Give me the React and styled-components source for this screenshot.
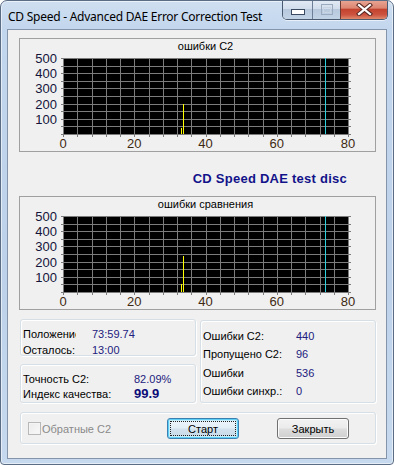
import React from 'react';
import styled, { createGlobalStyle } from 'styled-components';

const GlobalStyle = createGlobalStyle`
	html, body {
		margin: 0;
		padding: 0;
		background: #ffffff;
		overflow: hidden;
	}
	body {
		font-family: 'Liberation Sans', Arial, sans-serif;
		font-size: 11px;
	}
`;

const PLOT = { left: 43, right: 328, top: 9, bottom: 85 };
const colW = (PLOT.right - PLOT.left) / 20;
const rowH = (PLOT.bottom - PLOT.top) / 10;

const Chart = ({ title, bars, marker }) => {
	const vLines = Array.from({ length: 21 }, (_, i) => Math.round(PLOT.left + i * colW) + 0.5);
	const hLines = Array.from({ length: 11 }, (_, j) => Math.round(PLOT.top + j * rowH) + 0.5);
	return (
		<ChartBox>
			<ChartTitle>{title}</ChartTitle>
			<PlotSvg width='355' height='102'>
				<rect
					x={PLOT.left}
					y={PLOT.top}
					width={PLOT.right - PLOT.left}
					height={PLOT.bottom - PLOT.top}
					fill='#000'
				/>
				{vLines.map((x) => (
					<line key={'v' + x} x1={x} x2={x} y1={PLOT.top} y2={PLOT.bottom + 3} stroke='#7c7c7c' />
				))}
				{hLines.map((y) => (
					<line key={'h' + y} x1={PLOT.left - 2} x2={PLOT.right + 3} y1={y} y2={y} stroke='#7c7c7c' />
				))}
				<line x1={marker + 0.5} x2={marker + 0.5} y1={PLOT.top} y2={PLOT.bottom} stroke='#2cd0dc' />
				{bars.map((b) => (
					<line
						key={b.x}
						x1={b.x + 0.5}
						x2={b.x + 0.5}
						y1={b.top + 4}
						y2={PLOT.bottom}
						stroke='#ffff00'
					/>
				))}
				{[500, 400, 300, 200, 100].map((v) => (
					<AxisText
						key={v}
						x='37'
						y={PLOT.top + ((500 - v) / 50) * rowH + 0.5}
						textAnchor='end'
						dominantBaseline='central'
						fill='#14143a'
					>
						{v}
					</AxisText>
				))}
				{[0, 20, 40, 60, 80].map((v) => (
					<AxisText
						key={v}
						x={PLOT.left + (v / 4) * colW}
						y='94'
						textAnchor='middle'
						dominantBaseline='central'
						fill='#3e2a12'
					>
						{v}
					</AxisText>
				))}
			</PlotSvg>
		</ChartBox>
	);
};

const App = () => {
	return (
		<>
			<GlobalStyle />
			<Window>
				<TitleBar>
					<TitleText>CD Speed - Advanced DAE Error Correction Test</TitleText>
					<CaptionButtons>
						<CaptionButton $w={29}>
							<svg width='14' height='6'>
								<rect x='0.5' y='0.5' width='13' height='5' fill='#fff' stroke='#3a4a60' />
							</svg>
						</CaptionButton>
						<CaptionButton $w={28} $divider>
							<svg width='12' height='11'>
								<rect x='0.5' y='0.5' width='11' height='10' fill='none' stroke='#9aabbf' />
								<rect x='2.5' y='3.5' width='7' height='5' fill='none' stroke='#c8d4e2' />
							</svg>
						</CaptionButton>
						<CloseButton>
							<svg width='17' height='13'>
								<path d='M3 2 L14 11 M14 2 L3 11' stroke='#5a2a24' strokeWidth='4.2' strokeLinecap='square' />
								<path d='M3 2 L14 11 M14 2 L3 11' stroke='#fff' strokeWidth='2.2' strokeLinecap='square' />
							</svg>
						</CloseButton>
					</CaptionButtons>
				</TitleBar>
				<Client>
					<Chart
						title='ошибки C2'
						marker={305}
						bars={[
							{ x: 161, top: 75 },
							{ x: 163, top: 51 },
						]}
					/>
					<DiscCaption>CD Speed DAE test disc</DiscCaption>
					<Chart
						title='ошибки сравнения'
						marker={305}
						bars={[
							{ x: 161, top: 73 },
							{ x: 163, top: 45 },
						]}
					/>
					<StatsGrid>
						<LeftColumn>
							<GroupBox $height={37}>
								<StatRows $label={53} $gap={16} $top={6}>
									<Label>Положение:</Label>
									<Value>73:59.74</Value>
									<Label>Осталось:</Label>
									<Value>13:00</Value>
								</StatRows>
							</GroupBox>
							<GroupBox $height={39}>
								<StatRows $label={111} $gap={0} $top={7} $row={14.5}>
									<Label>Точность C2:</Label>
									<Value>82.09%</Value>
									<Label>Индекс качества:</Label>
									<Value $big>99.9</Value>
								</StatRows>
							</GroupBox>
						</LeftColumn>
						<GroupBox $height={83} $offset={1}>
							<StatRows $label={93} $gap={0} $top={6} $row={18.3}>
								<Label>Ошибки C2:</Label>
								<Value>440</Value>
								<Label>Пропущено C2:</Label>
								<Value>96</Value>
								<Label>Ошибки</Label>
								<Value>536</Value>
								<Label>Ошибки синхр.:</Label>
								<Value>0</Value>
							</StatRows>
						</GroupBox>
					</StatsGrid>
					<ActionBox>
						<CheckOption>
							<CheckBox />
							<span>Обратные C2</span>
						</CheckOption>
						<PushButton $default>Старт</PushButton>
						<PushButton>Закрыть</PushButton>
					</ActionBox>
				</Client>
			</Window>
		</>
	);
};

export default App;

const Window = styled.div`
	width: 394px;
	height: 465px;
	box-sizing: border-box;
	border: 1px solid #5b6d84;
	border-radius: 7px 7px 4px 4px;
	background: linear-gradient(180deg, #cfdff1 0%, #c2d6ed 28px, #bdd2ea 60%, #c6d9ee 100%);
	box-shadow: inset 0 0 0 1px rgba(255, 255, 255, 0.55);
	display: flex;
	flex-direction: column;
	overflow: hidden;
`;

const TitleBar = styled.div`
	height: 28px;
	display: flex;
	align-items: center;
	justify-content: space-between;
	padding-left: 7px;
	padding-right: 5px;
`;

const TitleText = styled.div`
	font-family: 'Noto Sans', 'Open Sans', sans-serif;
	font-size: 12px;
	letter-spacing: -0.25px;
	color: #000;
	padding-top: 2px;
`;

const CaptionButtons = styled.div`
	align-self: flex-start;
	margin-top: -1px;
	display: flex;
	height: 19px;
	border: 1px solid #4a5a70;
	border-top: none;
	border-radius: 0 0 5px 5px;
	overflow: hidden;
	box-shadow: 0 1px 0 rgba(255, 255, 255, 0.6);
`;

const CaptionButton = styled.div`
	width: ${(p) => p.$w}px;
	display: flex;
	align-items: center;
	justify-content: center;
	padding-top: ${(p) => (p.$divider ? 0 : 5)}px;
	box-sizing: border-box;
	border-left: ${(p) => (p.$divider ? '1px solid #6d7f96' : 'none')};
	background: linear-gradient(
		180deg,
		#e3ebf5 0%,
		#d2deec 45%,
		#b8c9dd 50%,
		#c3d3e6 100%
	);
	box-shadow: inset 0 1px 0 rgba(255, 255, 255, 0.6);
`;

const CloseButton = styled.div`
	width: 46px;
	display: flex;
	align-items: center;
	justify-content: center;
	border-left: 1px solid #6d3a34;
	background: linear-gradient(
		180deg,
		#e9a896 0%,
		#dc8672 42%,
		#c4432e 50%,
		#cc5440 78%,
		#e08a6c 100%
	);
	box-shadow: inset 0 1px 0 rgba(255, 255, 255, 0.5);
`;

const Client = styled.div`
	margin: 0 6px;
	height: 430px;
	box-sizing: border-box;
	border: 1px solid #8494aa;
	background: #f0f0f0;
	padding: 8px 10px 0 11px;
	display: flex;
	flex-direction: column;
`;

const ChartBox = styled.div`
	width: 357px;
	height: 114px;
	box-sizing: border-box;
	border: 1px solid #a0a0a0;
	flex: none;
`;

const ChartTitle = styled.div`
	height: 14px;
	line-height: 14px;
	font-size: 11px;
	color: #000;
	text-align: center;
	padding-left: 16px;
`;

const PlotSvg = styled.svg`
	display: block;
	margin-top: -4px;
`;

const AxisText = styled.text`
	font-family: 'Liberation Sans', Arial, sans-serif;
	font-size: 13px;
`;

const DiscCaption = styled.div`
	height: 44px;
	box-sizing: border-box;
	padding: 8px 29px 0 0;
	display: flex;
	align-items: center;
	justify-content: flex-end;
	font-size: 13px;
	font-weight: bold;
	letter-spacing: 0.25px;
	color: #12128a;
	flex: none;
`;

const StatsGrid = styled.div`
	margin: 9px 0 0 1px;
	display: grid;
	grid-template-columns: 176px 176px;
	column-gap: 4px;
	flex: none;
`;

const LeftColumn = styled.div`
	display: flex;
	flex-direction: column;
	gap: 8px;
`;

const GroupBox = styled.div`
	height: ${(p) => p.$height}px;
	margin-top: ${(p) => p.$offset || 0}px;
	box-sizing: border-box;
	border: 1px solid #d5dfe5;
	border-radius: 3px;
	box-shadow: inset 1px 1px 0 #ffffff, 1px 1px 0 #ffffff;
`;

const StatRows = styled.div`
	display: grid;
	grid-template-columns: ${(p) => p.$label}px auto;
	column-gap: ${(p) => p.$gap}px;
	grid-auto-rows: ${(p) => p.$row || 16}px;
	align-items: center;
	padding: ${(p) => p.$top}px 0 0 2px;
`;

const Label = styled.div`
	font-size: 11px;
	color: #000;
	white-space: nowrap;
	overflow: hidden;
`;

const Value = styled.div`
	font-size: ${(p) => (p.$big ? 13 : 11)}px;
	font-weight: ${(p) => (p.$big ? 'bold' : 'normal')};
	color: ${(p) => (p.$big ? '#0c0c78' : '#22207e')};
	white-space: nowrap;
`;

const ActionBox = styled.div`
	margin: 9px 0 0 1px;
	width: 356px;
	height: 32px;
	box-sizing: border-box;
	border: 1px solid #d5dfe5;
	border-radius: 3px;
	box-shadow: inset 1px 1px 0 #ffffff, 1px 1px 0 #ffffff;
	display: flex;
	align-items: center;
	padding: 1px 0 0 7px;
	flex: none;
`;

const CheckOption = styled.label`
	width: 139px;
	display: flex;
	align-items: center;
	gap: 1px;
	color: #8a8a8a;
	font-size: 11px;
`;

const CheckBox = styled.span`
	width: 13px;
	height: 13px;
	box-sizing: border-box;
	border: 1px solid #b8b8b8;
	background: linear-gradient(135deg, #ebebeb, #f8f8f8);
	box-shadow: inset 0 0 0 1px #f4f4f4;
`;

const PushButton = styled.button`
	position: relative;
	width: 72px;
	height: 21px;
	margin-right: ${(p) => (p.$default ? 38 : 0)}px;
	padding: 0;
	font-family: 'Liberation Sans', Arial, sans-serif;
	font-size: 11px;
	color: #000;
	border-radius: 3px;
	border: 1px solid ${(p) => (p.$default ? '#3c7fb1' : '#707070')};
	background: ${(p) =>
		p.$default
			? 'linear-gradient(180deg, #eef6fb 0%, #e3eef6 48%, #d2e2ee 52%, #c7dae8 100%)'
			: 'linear-gradient(180deg, #f2f2f2 0%, #ebebeb 48%, #dddddd 52%, #cfcfcf 100%)'};
	box-shadow: ${(p) =>
		p.$default ? 'inset 0 0 0 1px #5fd0f5, inset 0 0 0 2px #c6ecfa' : 'inset 0 0 0 1px #fbfbfb'};
	&::after {
		content: '';
		display: ${(p) => (p.$default ? 'block' : 'none')};
		position: absolute;
		inset: 2px;
		border: 1px dotted #222;
	}
`;
